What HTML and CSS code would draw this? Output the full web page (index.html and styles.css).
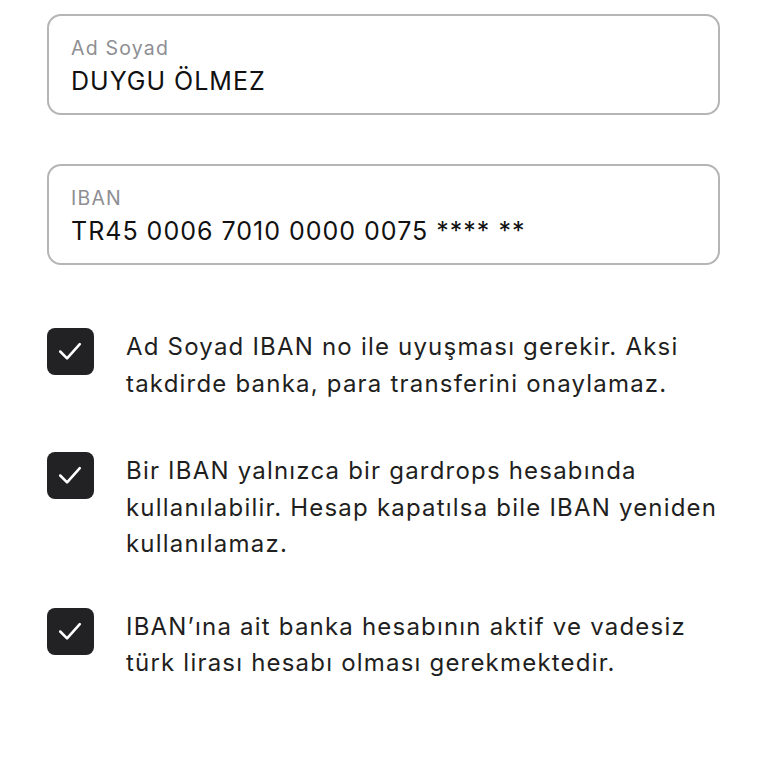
FILE: index.html
```html
<!DOCTYPE html>
<html lang="tr">
<head>
<meta charset="utf-8">
<link rel="stylesheet" href="styles.css">
</head>
<body>
<main class="page">
  <div class="field">
    <div class="field-label">Ad Soyad</div>
    <div class="field-value">DUYGU ÖLMEZ</div>
  </div>
  <div class="field">
    <div class="field-label">IBAN</div>
    <div class="field-value">TR45 0006 7010 0000 0075 **** **</div>
  </div>
  <ul class="checks">
    <li class="check-item">
      <span class="box"><svg viewBox="0 0 48 48" width="47" height="47"><path d="M13.5 24 L20.5 31 L33.5 16.5" fill="none" stroke="#fff" stroke-width="2.6" stroke-linecap="round" stroke-linejoin="round"/></svg></span>
      <p class="check-text">Ad Soyad IBAN no ile uyuşması gerekir. Aksi takdirde banka, para transferini onaylamaz.</p>
    </li>
    <li class="check-item">
      <span class="box"><svg viewBox="0 0 48 48" width="47" height="47"><path d="M13.5 24 L20.5 31 L33.5 16.5" fill="none" stroke="#fff" stroke-width="2.6" stroke-linecap="round" stroke-linejoin="round"/></svg></span>
      <p class="check-text">Bir IBAN yalnızca bir gardrops hesabında kullanılabilir. Hesap kapatılsa bile IBAN yeniden kullanılamaz.</p>
    </li>
    <li class="check-item check-item--tight">
      <span class="box"><svg viewBox="0 0 48 48" width="47" height="47"><path d="M13.5 24 L20.5 31 L33.5 16.5" fill="none" stroke="#fff" stroke-width="2.6" stroke-linecap="round" stroke-linejoin="round"/></svg></span>
      <p class="check-text">IBAN’ına ait banka hesabının aktif ve vadesiz türk lirası hesabı olması gerekmektedir.</p>
    </li>
  </ul>
</main>
</body>
</html>
```

FILE: styles.css
```css
* { box-sizing: border-box; }
html, body { margin: 0; padding: 0; background: #fff; }
body { font-family: Inter, "Noto Sans", "Liberation Sans", sans-serif; color: #1c1c1e; }
.page {
  width: 768px;
  padding: 14px 48px 0 47px;
  display: flex;
  flex-direction: column;
}
.field {
  height: 101px;
  border: 2px solid #b5b5b8;
  border-radius: 14px;
  padding: 20px 22px 0 22px;
  margin-bottom: 49px;
}
.field-label {
  font-size: 19.5px;
  line-height: 24px;
  letter-spacing: 1.2px;
  color: #8e8e93;
}
.field-value {
  margin-top: 6px;
  font-size: 25px;
  line-height: 30px;
  letter-spacing: 1px;
  color: #111;
}
.checks {
  list-style: none;
  margin: 14px 0 0 0;
  padding: 0;
  display: flex;
  flex-direction: column;
  gap: 50px;
}
.check-item {
  display: flex;
  align-items: flex-start;
  gap: 32px;
}
.check-item--tight { margin-top: -5px; }
.box {
  flex: none;
  width: 47px;
  height: 47px;
  border-radius: 8px;
  background: #222224;
  display: block;
}
.box svg { display: block; }
.check-text {
  margin: 1px 0 0 0;
  font-size: 24px;
  line-height: 36.5px;
  letter-spacing: 1.2px;
  color: #1f1f21;
}
```
